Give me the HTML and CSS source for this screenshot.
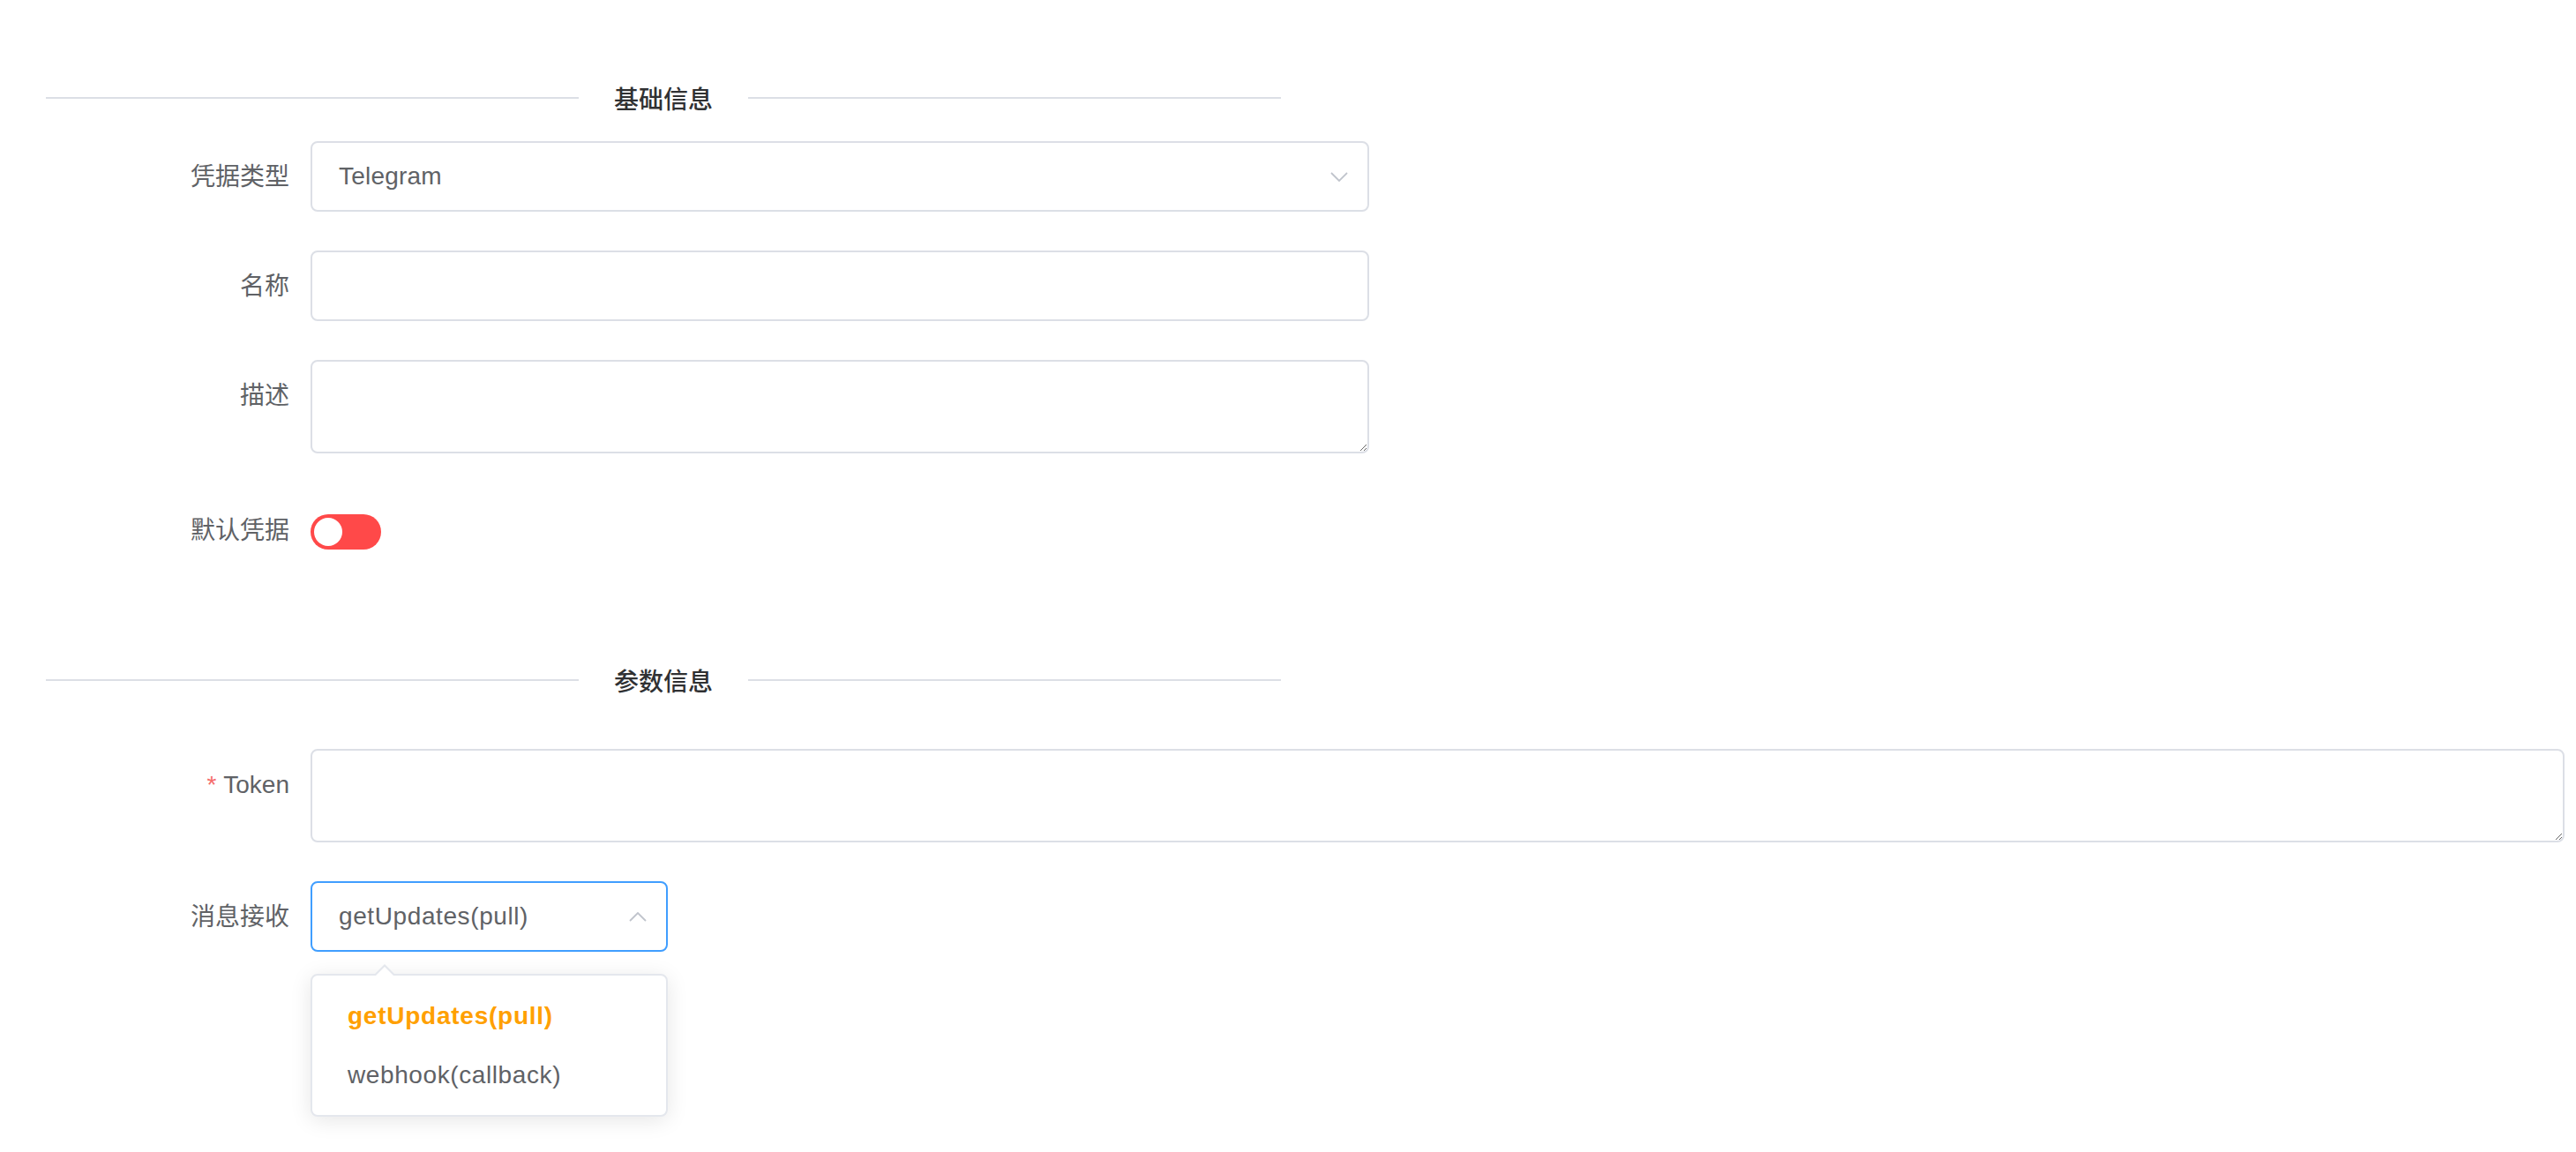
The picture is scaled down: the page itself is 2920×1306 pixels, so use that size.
FILE: index.html
```html
<!DOCTYPE html>
<html lang="zh-CN">
<head>
<meta charset="utf-8">
<title>凭据</title>
<link rel="stylesheet" href="styles.css">
</head>
<body>
<div class="page">
  <div class="divider"><span class="divider-text">基础信息</span></div>

  <div class="form-section">
    <div class="form-item">
      <label class="form-label">凭据类型</label>
      <div class="form-content w-main">
        <div class="select">
          <span class="select-value">Telegram</span>
          <svg class="chevron" width="20" height="11" viewBox="0 0 20 11"><polyline points="1,1 10,10 19,1" fill="none" stroke="#c0c4cc" stroke-width="1.8"/></svg>
        </div>
      </div>
    </div>

    <div class="form-item">
      <label class="form-label">名称</label>
      <div class="form-content w-main">
        <input class="input" type="text">
      </div>
    </div>

    <div class="form-item">
      <label class="form-label">描述</label>
      <div class="form-content w-main">
        <textarea class="textarea"></textarea>
      </div>
    </div>

    <div class="form-item form-item-last">
      <label class="form-label label-switch">默认凭据</label>
      <div class="form-content switch-content">
        <span class="switch"><span class="switch-knob"></span></span>
      </div>
    </div>
  </div>

  <div class="divider divider-second"><span class="divider-text">参数信息</span></div>

  <div class="form-section">
    <div class="form-item">
      <label class="form-label"><span class="required">*</span>Token</label>
      <div class="form-content w-full">
        <textarea class="textarea"></textarea>
      </div>
    </div>

    <div class="form-item">
      <label class="form-label">消息接收</label>
      <div class="form-content w-small">
        <div class="select select-focus">
          <span class="select-value spaced">getUpdates(pull)</span>
          <svg class="chevron" width="20" height="11" viewBox="0 0 20 11"><polyline points="1,10 10,1 19,10" fill="none" stroke="#c0c4cc" stroke-width="1.8"/></svg>
        </div>
        <div class="dropdown">
          <ul class="dropdown-list">
            <li class="dropdown-item selected">getUpdates(pull)</li>
            <li class="dropdown-item">webhook(callback)</li>
          </ul>
        </div>
      </div>
    </div>
  </div>
</div>
</body>
</html>
```

FILE: styles.css
```css
html, body {
  margin: 0;
  padding: 0;
  background: #ffffff;
}

body {
  font-family: "Liberation Sans", "Noto Sans CJK SC", sans-serif;
  font-size: 28px;
  color: #606266;
  min-height: 1306px;
}

.page {
  padding: 110px 13px 0 52px;
  min-height: 1306px;
  box-sizing: border-box;
}

.divider {
  position: relative;
  width: 1400px;
  height: 2px;
  background: #dcdfe6;
  margin: 0 0 48px 0;
}

.divider-second {
  margin-top: 132px;
  margin-bottom: 77px;
}

.divider-text {
  position: absolute;
  left: 50%;
  top: 50%;
  transform: translate(-50%, -50%);
  background: #ffffff;
  padding: 0 40px;
  font-family: "Noto Sans CJK SC", sans-serif;
  font-weight: 500;
  font-size: 28px;
  color: #303133;
  line-height: 40px;
  white-space: nowrap;
}

.form-item {
  display: flex;
  align-items: flex-start;
  margin-bottom: 44px;
}

.form-item-last {
  margin-bottom: 0;
}

.form-label {
  width: 300px;
  height: 80px;
  flex: none;
  box-sizing: border-box;
  padding-right: 24px;
  padding-top: 1px;
  text-align: right;
  line-height: 80px;
  font-size: 28px;
  color: #606266;
  font-family: "Liberation Sans", "Noto Sans CJK SC", sans-serif;
}

.label-switch {
  padding-top: 4px;
}

.required {
  color: #f56c6c;
  margin-right: 8px;
}

.form-content {
  position: relative;
}

.w-main {
  width: 1200px;
}

.w-full {
  flex: 1;
}

.w-small {
  width: 405px;
}

.select {
  height: 80px;
  box-sizing: border-box;
  border: 2px solid #dcdfe6;
  border-radius: 8px;
  display: flex;
  align-items: center;
  justify-content: space-between;
  padding: 0 22px 0 30px;
  background: #ffffff;
}

.select-focus {
  border-color: #409eff;
}

.select-value {
  font-size: 28px;
  color: #606266;
  letter-spacing: 0.2px;
}

.select-value.spaced {
  letter-spacing: 0.6px;
}

.chevron {
  display: block;
  flex: none;
}

.input {
  display: block;
  width: 100%;
  height: 80px;
  box-sizing: border-box;
  border: 2px solid #dcdfe6;
  border-radius: 8px;
  padding: 0 30px;
  font: inherit;
  color: #606266;
  outline: none;
  background: #ffffff;
}

.textarea {
  display: block;
  width: 100%;
  height: 106px;
  box-sizing: border-box;
  border: 2px solid #dcdfe6;
  border-radius: 8px;
  padding: 10px 30px;
  font: inherit;
  color: #606266;
  resize: vertical;
  outline: none;
  background: #ffffff;
}

.switch-content {
  padding-top: 25px;
  height: 80px;
  box-sizing: border-box;
}

.switch {
  display: block;
  position: relative;
  width: 80px;
  height: 40px;
  border-radius: 20px;
  background: #ff4949;
}

.switch-knob {
  position: absolute;
  left: 4px;
  top: 4px;
  width: 32px;
  height: 32px;
  border-radius: 50%;
  background: #ffffff;
}

.dropdown {
  position: absolute;
  left: 0;
  top: 105px;
  width: 100%;
  box-sizing: border-box;
  border: 2px solid #e4e7ed;
  border-radius: 8px;
  background: #ffffff;
  box-shadow: 0 4px 24px rgba(0, 0, 0, 0.1);
  z-index: 10;
}

.dropdown::before,
.dropdown::after {
  content: "";
  position: absolute;
  left: 70px;
  width: 0;
  height: 0;
  border-left: 12px solid transparent;
  border-right: 12px solid transparent;
}

.dropdown::before {
  top: -13px;
  border-bottom: 12px solid #e4e7ed;
}

.dropdown::after {
  top: -10px;
  border-bottom: 12px solid #ffffff;
}

.dropdown-list {
  list-style: none;
  margin: 0;
  padding: 12px 0;
}

.dropdown-item {
  height: 67px;
  line-height: 67px;
  padding: 0 40px;
  font-size: 28px;
  color: #606266;
  white-space: nowrap;
  letter-spacing: 0.6px;
}

.dropdown-item.selected {
  color: #ffa000;
  font-weight: 700;
  letter-spacing: 0.75px;
}
```
